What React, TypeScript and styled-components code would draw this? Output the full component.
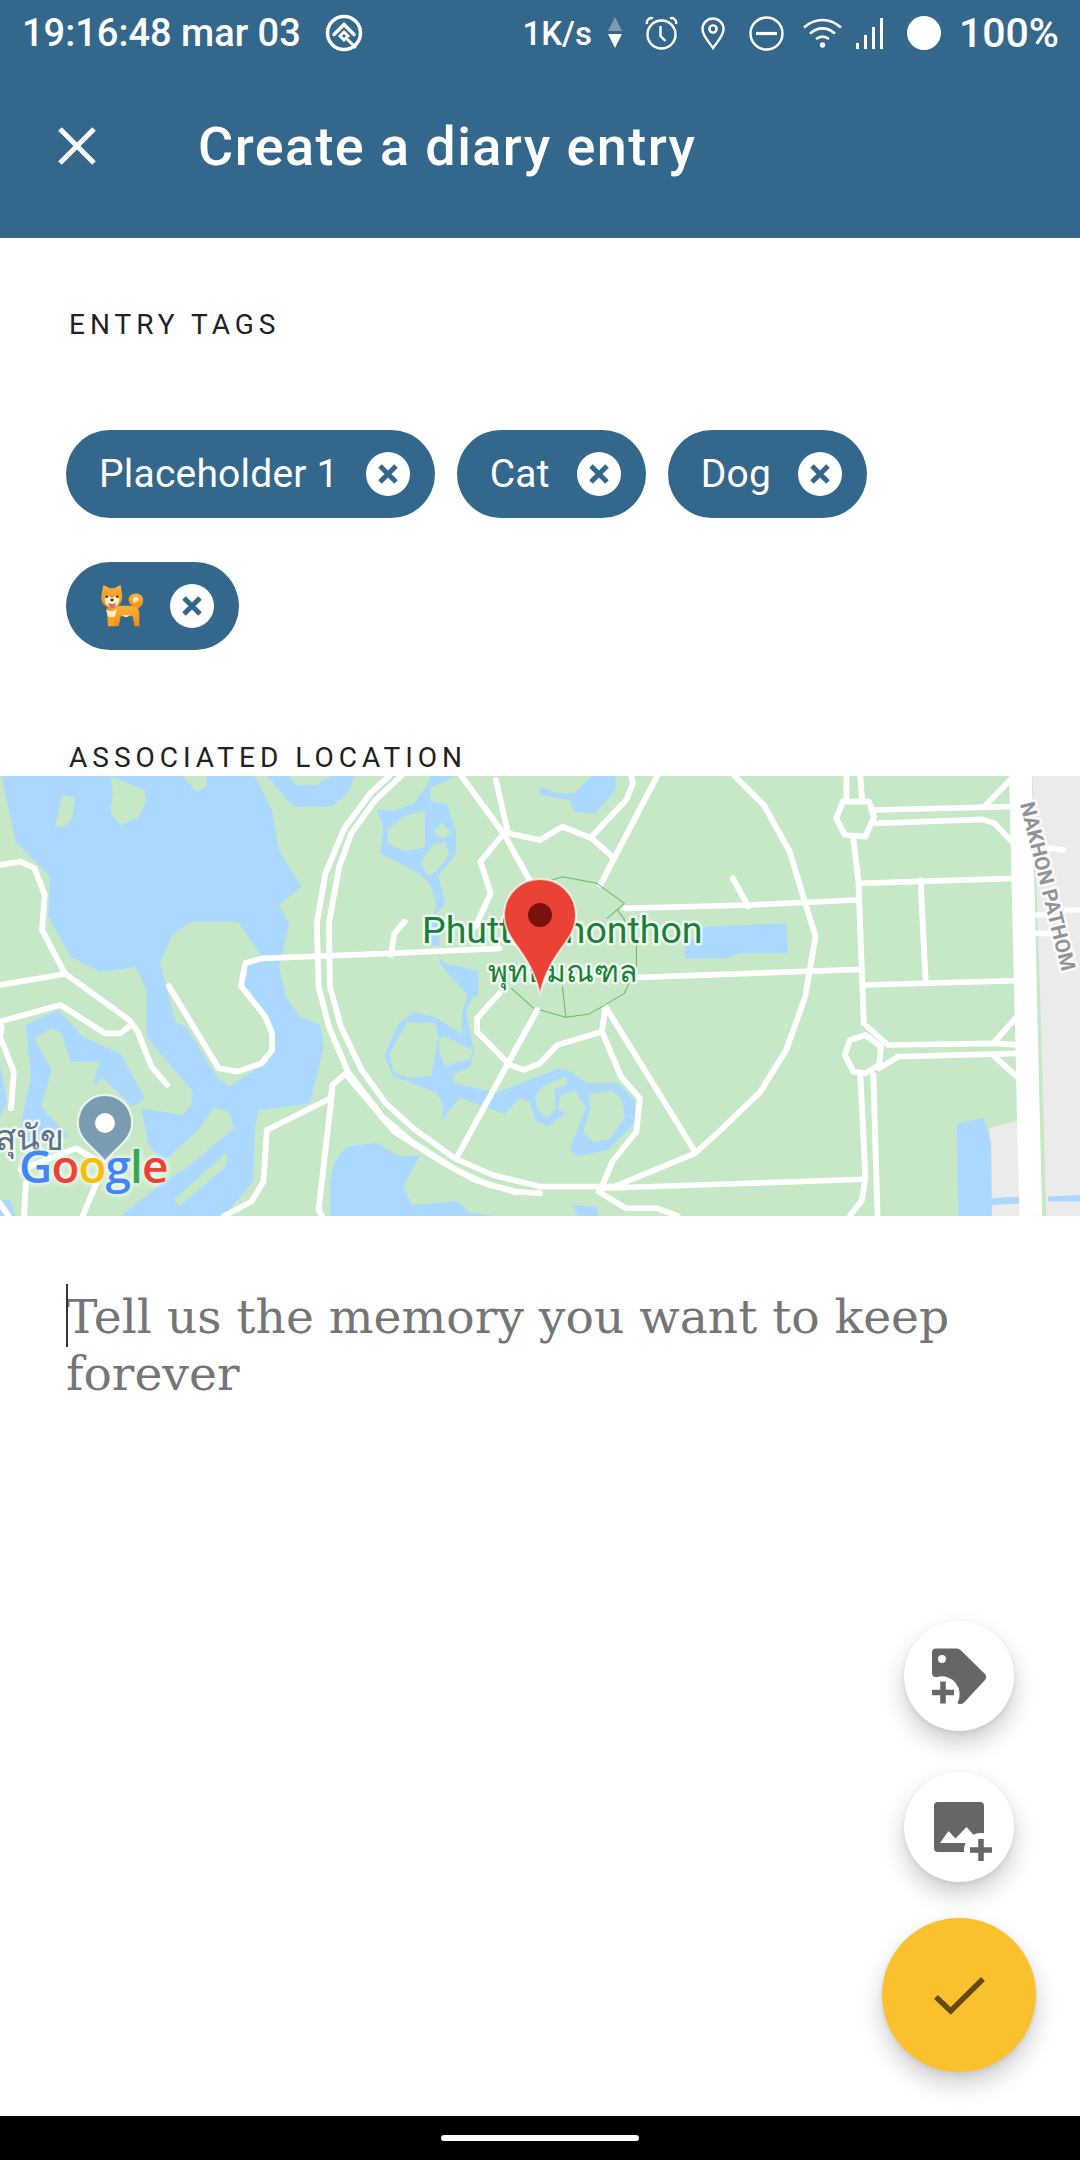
import * as React from "react";
import styled, { createGlobalStyle } from "styled-components";

const BLUE = "#34678c";
const GREEN = "#c6e8c6";
const WATER = "#aad8fe";
const GREY = "#ebebeb";

const GlobalStyle = createGlobalStyle`
  html, body {
    margin: 0;
    padding: 0;
    background: #ffffff;
  }
`;

const Screen = styled.div`
  position: relative;
  width: 1080px;
  height: 2160px;
  display: flex;
  flex-direction: column;
  overflow: hidden;
  background: #ffffff;
  font-family: "Roboto", "Liberation Sans", sans-serif;
`;

const Header = styled.header`
  height: 238px;
  flex-shrink: 0;
  display: flex;
  flex-direction: column;
  background: ${BLUE};
  color: #ffffff;
`;

const StatusBar = styled.div`
  height: 66px;
  padding: 0 21px 0 22px;
  display: flex;
  align-items: center;
  justify-content: space-between;
  font-weight: 500;
`;

const StatusGroup = styled.div`
  display: flex;
  align-items: center;
`;

const StatusText = styled.span<{ $gap?: number; $size: number }>`
  margin-right: ${(p) => p.$gap ?? 0}px;
  font-size: ${(p) => p.$size}px;
  white-space: nowrap;
`;

const StatusIcon = styled.svg<{ $gap?: number }>`
  display: block;
  margin-right: ${(p) => p.$gap ?? 0}px;
`;

const TitleBar = styled.div`
  flex: 1;
  padding: 0 0 12px 58px;
  display: flex;
  align-items: center;
`;

const CloseIcon = styled.svg`
  margin-right: 102px;
`;

const Title = styled.h1`
  margin: 0;
  font-size: 54px;
  font-weight: 500;
  letter-spacing: 1.4px;
`;

const Content = styled.main`
  flex: 1;
  display: flex;
  flex-direction: column;
`;

const SectionLabel = styled.h2<{ $top: number }>`
  margin: ${(p) => p.$top}px 0 0 69px;
  color: #222222;
  font-size: 28px;
  line-height: 30px;
  font-weight: 400;
  letter-spacing: 5px;
`;

const Chips = styled.div`
  margin: 90px 0 0 66px;
  width: 860px;
  display: flex;
  flex-wrap: wrap;
  gap: 44px 22px;
`;

const Chip = styled.div`
  height: 88px;
  padding: 0 25px 0 33px;
  display: flex;
  align-items: center;
  gap: 27px;
  border-radius: 44px;
  background: ${BLUE};
  color: #ffffff;
  font-size: 39px;
  letter-spacing: 0.2px;
`;

const ChipClose = styled.svg`
  flex-shrink: 0;
`;

const MapFrame = styled.div`
  position: relative;
  margin-top: 3px;
  height: 440px;
  overflow: hidden;
  background: ${GREEN};
`;

const MapDrawing = styled.svg`
  display: block;
`;

const GoogleMark = styled.div`
  position: absolute;
  left: 19px;
  top: 359px;
  font-family: "Open Sans", "Roboto", sans-serif;
  font-size: 46px;
  line-height: 60px;
  font-weight: 600;
  letter-spacing: -1px;
  text-shadow: 0 0 6px rgba(255, 255, 255, 0.85), 0 0 6px rgba(255, 255, 255, 0.85);
`;

const GoogleLetter = styled.span<{ $color: string }>`
  color: ${(p) => p.$color};
`;

const Memory = styled.div`
  position: relative;
  margin: 72px 60px 0 66px;
  color: #757575;
  font-family: "DejaVu Serif", "Liberation Serif", serif;
  font-size: 47.200px;
  line-height: 57px;
`;

const Caret = styled.span`
  position: absolute;
  left: 0;
  top: -4px;
  width: 2px;
  height: 63px;
  background: #333333;
`;

const Fab = styled.button<{ $size: number; $bg: string; $top: number }>`
  position: absolute;
  left: ${(p) => 959 - p.$size / 2}px;
  top: ${(p) => p.$top - p.$size / 2}px;
  width: ${(p) => p.$size}px;
  height: ${(p) => p.$size}px;
  padding: 0;
  border: none;
  border-radius: 50%;
  background: ${(p) => p.$bg};
  box-shadow: 0 12px 24px rgba(0, 0, 0, 0.2), 0 2px 5px rgba(0, 0, 0, 0.08);
`;

const NavBar = styled.div`
  height: 44px;
  flex-shrink: 0;
  display: flex;
  align-items: center;
  justify-content: center;
  background: #000000;
`;

const HomePill = styled.div`
  width: 198px;
  height: 6px;
  border-radius: 3px;
  background: #ffffff;
`;

// the road and water points were read off zoomed crops, so each set keeps its crop's scale
const Crop = {
  L: "translate(0,-6) scale(.3444,.3333)",
  R: "translate(540,-6) scale(.3444,.3333)",
  Upper: "translate(330,0) scale(.3333)",
  Lower: "translate(330,220) scale(.3333)",
};

const waterLeft = [
  "5,18 45,215 145,320 140,440 205,560 290,605 395,592 425,660 425,800 560,965 555,1005 530,1035 410,1015 430,1120 470,1180 580,1075 620,1012 665,1025 680,1075 540,1195 470,1240 350,1338 650,1338 735,1235 740,1080 750,1020 900,1000 940,830 930,765 870,740 830,680 810,590 840,460 810,405 875,350 810,240 790,120 740,18",
  "775,18 850,110 960,110 1010,70 1030,18",
  "170,720 240,800 350,850 420,985 385,1010 300,925 270,945 290,875 205,875 180,790 150,775 100,805 150,900 120,1010 200,1100 60,1130 65,1040 90,920 75,765",
  "0,880 20,1000 0,1040",
  "0,1290 30,1290 45,1338 0,1338",
];

const greenLeft = [
  "180,75 218,80 210,145 185,170 160,170",
  "320,18 420,60 425,95 400,145 350,165 320,130 328,70",
  "530,18 570,65 600,50 600,18",
  "465,580 500,495 555,455 690,455 755,550 710,580 695,645 790,770 795,840 770,880 665,950 630,920 540,770 480,745 510,755",
  "505,1290 660,1145 655,1190 520,1310",
  "840,18 860,45 920,45 960,18",
];

const waterUpper = [
  "140,100 185,105 250,85 290,30 300,0 380,0 300,35 302,75 350,85 378,165 378,235 325,298 345,385 320,410 330,510 305,510 305,430 320,385 300,325 270,295 150,230 160,150",
  "325,540 345,562 445,585 445,660 415,660 335,570",
];

const greenUpper = [
  "172,160 225,120 285,102 285,215 225,225 175,205",
  "310,165 335,140 365,170 335,190",
  "272,260 310,205 345,197 358,235 320,285 295,300",
];

const waterLower = [
  "163,180 205,82 255,47 320,65 395,115 397,45 412,0 432,0 407,45 432,165 420,215 370,235 372,262 500,290 685,218 720,225 770,262 865,262 915,315 915,380 835,462 742,480 720,460 768,335 735,282 690,300 685,338 705,355 655,390 618,378 600,318 570,305 525,355 390,305 335,370 340,330 320,290 190,240",
  "0,560 12,500 50,452 140,440 210,482 272,478 220,570 245,628 380,615 420,650 500,660 0,660",
  "725,628 800,632 805,660 745,660",
];

const greenLower = [
  "180,170 232,78 315,82 325,120 305,240 240,245 190,228",
  "328,125 345,120 430,165 420,190 345,210 328,170",
  "640,270 710,240 712,265 672,282 678,335 650,365 622,340 615,300",
  "775,295 845,282 875,310 885,365 840,428 792,440 760,408 780,338",
];

const roadsLeft = [
  "1130,18 1075,70 1000,175 945,310 920,460 925,650 955,770 1010,905 1110,1040 1195,1115 1325,1200 1420,1245 1500,1265 1568,1270",
  "1165,18 1090,90 1020,190 985,290 955,460 958,650 990,770 1050,900 1120,1000 1200,1075 1320,1165 1430,1215 1568,1250",
  "1450,535 1135,550 760,565 712,580 700,648 770,740 790,790 790,840 760,880 690,905 635,895 490,648",
  "1175,455 1145,490 1135,555",
  "0,285 60,275 100,295 130,375 122,480 188,610 375,750 400,785 440,890 485,945",
  "0,645 188,612",
  "0,755 175,705 305,790 350,790 380,765",
  "5,770 0,800 40,905 32,1015",
  "1010,905 965,945 960,985 775,1080 765,1235 730,1295 650,1338",
  "965,960 925,1320 935,1338",
  "1010,920 1145,1085 1290,1180 1380,1230 1500,1268",
  "1325,1165 1475,880 1560,720",
  "1340,18 1465,195 1540,335",
  "1440,30 1475,190 1568,210",
  "1455,200 1395,275 1425,370 1380,470",
  "1450,670 1385,745 1385,785 1480,885 1520,900 1568,880",
  "240,1338 280,1240",
  "70,1338 75,1240",
  "0,1300 25,1338",
  "60,1200 220,1135 280,1170",
];

const waterRight = [
  "0,50 50,70 100,70 150,18 220,18 220,60 160,130 100,125 85,90 0,75",
  "420,530 480,470 715,460 720,550 580,550 545,565 420,565",
  "1210,1060 1290,1045 1310,1120 1312,1338 1215,1338",
  "1310,1285 1400,1280 1400,1300 1310,1305",
  "1475,1280 1568,1275 1568,1295 1475,1295",
];

const greyRight = [
  "1430,18 1568,18 1568,1338 1470,1338 1450,600",
  "1305,1075 1395,1050 1400,1338 1310,1338",
];

const roadsRight = [
  "0,210 65,170 150,205 210,260",
  "340,18 175,345",
  "150,200 250,90 270,40 265,18",
  "245,415 610,405 920,390",
  "560,325 605,410",
  "565,18 650,105 725,245 800,500 770,680 715,840 640,965 530,1075 450,1150 215,1250 0,1250",
  "290,622 935,598",
  "190,710 450,1145",
  "190,710 180,785 235,920 290,985 280,1085 210,1175 180,1250",
  "180,785 50,825 0,880",
  "890,18 890,90",
  "930,18 935,90",
  "970,120 1360,110",
  "975,160 1285,148 1320,160 1370,215",
  "1290,110 1370,25",
  "910,205 925,340 940,760",
  "930,340 1375,325",
  "1105,330 1120,640",
  "940,645 1385,632",
  "950,770 1010,825 1320,820 1390,825",
  "985,895 1040,860 1390,850",
  "1320,815 1385,740",
  "1320,860 1390,925",
  "930,915 945,1220 935,1290 900,1338",
  "968,915 980,1338",
  "180,1255 940,1228",
  "170,1265 250,1315 340,1315 400,1338",
  "1450,230 1520,240",
  "1530,420 1568,420",
  "1445,435 1480,435",
  "1445,490 1480,490",
];

const loopsRight = [
  "860,145 880,95 955,95 970,140 945,200 885,195",
  "885,855 900,810 945,795 990,830 985,885 945,910 910,905",
];

const parkLines = [
  "35,330 65,320 165,340 245,400 195,445",
  "225,420 280,500 280,590 245,670 180,710 140,733 75,742 0,720",
  "65,650 75,740",
];

const Shapes: React.FC<{ points: string[]; fill: string }> = ({ points, fill }) => (
  <>
    {points.map((p) => <polygon key={p} points={p} fill={fill} />)}
  </>
);

const MapArt: React.FC = () => (
  <MapDrawing width="1080" height="440" viewBox="0 0 1080 440">
    <rect width="1080" height="440" fill={GREEN} />
    <g transform={Crop.L}>
      <Shapes points={waterLeft} fill={WATER} />
      <Shapes points={greenLeft} fill={GREEN} />
    </g>
    <g transform={Crop.R}>
      <Shapes points={greyRight} fill={GREY} />
      <Shapes points={waterRight} fill={WATER} />
    </g>
    <g transform={Crop.Upper}>
      <Shapes points={waterUpper} fill={WATER} />
      <Shapes points={greenUpper} fill={GREEN} />
    </g>
    <g transform={Crop.Lower}>
      <Shapes points={waterLower} fill={WATER} />
      <Shapes points={greenLower} fill={GREEN} />
    </g>
    <g transform={Crop.L} fill="none" stroke="#ffffff" strokeWidth="17" strokeLinejoin="round" strokeLinecap="round">
      {roadsLeft.map((p) => <polyline key={p} points={p} />)}
      <polyline points="1485,655 1550,715" stroke="#66bb6a" strokeWidth="3" />
    </g>
    <g transform={Crop.R} fill="none" stroke="#ffffff" strokeWidth="17" strokeLinejoin="round" strokeLinecap="round">
      {roadsRight.map((p) => <polyline key={p} points={p} />)}
      {loopsRight.map((p) => <polygon key={p} points={p} />)}
      <polyline points="1395,18 1425,1338" strokeWidth="66" strokeLinecap="butt" />
      {parkLines.map((p) => <polyline key={p} points={p} stroke="#66bb6a" strokeWidth="3" />)}
    </g>
    <g stroke="#ffffff" strokeOpacity=".75" strokeWidth="5" paintOrder="stroke" strokeLinejoin="round">
      <text x="422" y="167" fontFamily="Roboto, sans-serif" fontSize="37.500" fill="#188038">Phutthamonthon</text>
      <text x="488" y="206" fontFamily="'Noto Sans', 'DejaVu Sans', sans-serif" fontSize="30" fill="#188038">พุทธมณฑล</text>
      <text x="-5" y="374" fontFamily="'Noto Sans', 'DejaVu Sans', sans-serif" fontSize="35" fill="#5b7083">สุนัข</text>
      <text x="0" y="0" transform="translate(1020,28) rotate(76)" fontFamily="Roboto, sans-serif" fontWeight="700" fontSize="20.500" fill="#909498">NAKHON PATHOM</text>
    </g>
    <path d="M540 103c-20 0-36 16-36 36 0 27 27 36 36 80 9-44 36-53 36-80 0-20-16-36-36-36z" fill="#ea4335" stroke="#ffffff" strokeOpacity=".7" strokeWidth="2" />
    <circle cx="540" cy="139" r="12" fill="#7b1210" />
    <path d="M105 319c-15 0-27 12-27 28 0 18 18 25 27 39 9-14 27-21 27-39 0-16-12-28-27-28z" fill="#7a9cb0" stroke="#ffffff" strokeOpacity=".8" strokeWidth="2" />
    <circle cx="105" cy="347" r="10" fill="#ffffff" />
  </MapDrawing>
);

const Statuses: React.FC = () => (
  <StatusBar>
    <StatusGroup>
      <StatusText $gap={23} $size={38}>19:16:48 mar 03</StatusText>
      <StatusIcon width="40" height="40" viewBox="0 0 40 40" fill="none" stroke="#fff" strokeLinecap="round">
        <circle cx="20" cy="20" r="16.500" strokeWidth="3.500" />
        <path d="M10 21.500L20 11.500l10 10" strokeWidth="3.500" />
        <path d="M16 23l4-4 4 4-4 4zM24 27l7 7" strokeWidth="3" />
      </StatusIcon>
    </StatusGroup>
    <StatusGroup>
      <StatusText $gap={16} $size={33}>1K/s</StatusText>
      <StatusIcon $gap={23} width="14" height="32" viewBox="0 0 14 32">
        <path d="M7 0l7 14H0z" fill="#fff" fillOpacity=".35" />
        <path d="M0 17h14l-7 14z" fill="#fff" />
      </StatusIcon>
      <StatusIcon $gap={23} width="33" height="34" viewBox="0 0 33 34" fill="none" stroke="#fff" strokeWidth="2.400">
        <circle cx="16.500" cy="18.500" r="14" />
        <path d="M15.500 10v10l5 5M2 8c-1-4 3-7 6-5.500M31 8c1-4-3-7-6-5.500" />
      </StatusIcon>
      <StatusIcon $gap={24} width="24" height="33" viewBox="0 0 24 33" fill="none" stroke="#fff" strokeWidth="2.400">
        <path d="M12 31C8 25 1.500 19 1.500 12a10.500 10.500 0 0 1 21 0c0 7-6.500 13-10.500 19z" />
        <circle cx="12" cy="12" r="3.600" />
      </StatusIcon>
      <StatusIcon $gap={19} width="35" height="35" viewBox="0 0 35 35" fill="none" stroke="#fff" strokeWidth="2.400">
        <circle cx="17.500" cy="17.500" r="16" />
        <path d="M7 17.500h21" strokeWidth="3.200" />
      </StatusIcon>
      <StatusIcon $gap={14} width="39" height="30" viewBox="0 0 39 30" fill="none" stroke="#fff" strokeWidth="2.600">
        <path d="M1 9.500c11-10 26-10 37 0M7 15.500c8-6.500 17-6.500 25 0M13 21c4-3 9-3 13 0" />
        <circle cx="19.500" cy="27" r="2.700" fill="#fff" stroke="none" />
      </StatusIcon>
      <StatusIcon $gap={24} width="27" height="31" viewBox="0 0 27 31" fill="#fff">
        <rect x="0" y="25" width="3" height="6" />
        <rect x="8" y="17" width="3" height="14" />
        <rect x="16" y="9" width="3" height="22" />
        <rect x="24" y="0" width="3" height="31" />
      </StatusIcon>
      <StatusIcon $gap={18} width="34" height="34" viewBox="0 0 34 34">
        <circle cx="17" cy="17" r="17" fill="#fff" />
      </StatusIcon>
      <StatusText $size={41}>100%</StatusText>
    </StatusGroup>
  </StatusBar>
);

const ChipX: React.FC = () => (
  <ChipClose width="44" height="44" viewBox="0 0 44 44">
    <circle cx="22" cy="22" r="22" fill="#ffffff" />
    <path d="M14 14l16 16M30 14L14 30" stroke={BLUE} strokeWidth="5" />
  </ChipClose>
);

const Shiba: React.FC = () => (
  <svg width="44" height="44" viewBox="27 27 132 132" role="img" aria-label="🐕">
    <defs>
      <linearGradient id="coat" x1="0" y1="0" x2="0" y2="1">
        <stop offset="0" stopColor="#fbb13c" />
        <stop offset="1" stopColor="#f08c12" />
      </linearGradient>
    </defs>
    <path d="M128 92c-14-6-18-24-2-34 16-8 36 2 34 20-1 12-10 20-20 24z" fill="url(#coat)" />
    <path d="M134 84c-8-4-8-14 0-18 8-3 14 4 12 10z" fill="#fde3ae" />
    <path d="M62 92h62c14 0 24 8 24 24v38h-14l-6-30H92l-6 30H72l-4-26-10-8z" fill="url(#coat)" />
    <path d="M50 100h22v54H54z" fill="#f5a21f" />
    <path d="M48 104c8 6 24 6 32-2l-4 20c-6 6-16 6-22 2z" fill="#fdeccd" />
    <path d="M40 30l20 10h12l20-10 5 32c2 20-14 38-32 38S31 82 34 62z" fill="url(#coat)" />
    <path d="M44 70c8-8 14-6 22 0 8-6 14-8 22 0 2 14-10 28-22 28S42 84 44 70z" fill="#fdeccd" />
    <circle cx="50" cy="65" r="3.500" fill="#222" />
    <circle cx="82" cy="65" r="3.500" fill="#222" />
    <ellipse cx="66" cy="75" rx="5" ry="4" fill="#222" />
    <path d="M54 85c8 3 16 3 24 0-1 6-4 14-11 14s-12-8-13-14z" fill="#e0607e" />
    <path d="M96 118c8 4 16 4 24 0l-8 8H104z" fill="#fdeccd" />
  </svg>
);

const tags: { key: string; label: React.ReactNode }[] = [
  { key: "placeholder", label: "Placeholder 1" },
  { key: "cat", label: "Cat" },
  { key: "dog", label: "Dog" },
  { key: "shiba", label: <Shiba /> },
];

const googleLetters: [string, string][] = [
  ["G", "#4285f4"],
  ["o", "#ea4335"],
  ["o", "#fbbc05"],
  ["g", "#4285f4"],
  ["l", "#34a853"],
  ["e", "#ea4335"],
];

const App: React.FC = () => (
  <Screen>
    <GlobalStyle />
    <Header>
      <Statuses />
      <TitleBar>
        <CloseIcon width="38" height="38" viewBox="0 0 38 38">
          <path d="M2 2l34 34M36 2L2 36" stroke="#fff" strokeWidth="5" />
        </CloseIcon>
        <Title>Create a diary entry</Title>
      </TitleBar>
    </Header>
    <Content>
      <SectionLabel $top={72}>ENTRY TAGS</SectionLabel>
      <Chips>
        {tags.map((tag) => (
          <Chip key={tag.key}>
            {tag.label}
            <ChipX />
          </Chip>
        ))}
      </Chips>
      <SectionLabel $top={93}>ASSOCIATED LOCATION</SectionLabel>
      <MapFrame>
        <MapArt />
        <GoogleMark>
          {googleLetters.map(([letter, color], i) => (
            <GoogleLetter key={i} $color={color}>{letter}</GoogleLetter>
          ))}
        </GoogleMark>
      </MapFrame>
      <Memory>
        <Caret />
        Tell us the memory you want to keep forever
      </Memory>
    </Content>
    <NavBar>
      <HomePill />
    </NavBar>
    <Fab $size={110} $bg="#ffffff" $top={1676}>
      <svg width="110" height="110" viewBox="0 0 110 110">
        <path fillRule="evenodd" fill="#666666" d="M32 27.500H53q2 0 3.500 1.500L81 53q2.500 3 0 6L60 81.500q-3 2.500-6 1l-.5-.5A18 18 0 0 0 33 56H32a4 4 0 0 1-4-4V31.500a4 4 0 0 1 4-4zM38 34a4 4 0 1 0 0 8 4 4 0 0 0 0-8z" />
        <path d="M28 71.500h22M39 60.500v22" stroke="#666666" strokeWidth="5.500" />
      </svg>
    </Fab>
    <Fab $size={110} $bg="#ffffff" $top={1827}>
      <svg width="110" height="110" viewBox="0 0 110 110">
        <rect x="30" y="30" width="50" height="50" rx="4" fill="#666666" />
        <path d="M36 71l8.500-12 7 7.500 11-11.500 9 10 5 6z" fill="#ffffff" />
        <circle cx="77" cy="78" r="17" fill="#ffffff" />
        <path d="M66 78h22M77 67v22" stroke="#666666" strokeWidth="5.500" />
      </svg>
    </Fab>
    <Fab $size={154} $bg="#fbc02d" $top={1995}>
      <svg width="154" height="154" viewBox="0 0 154 154">
        <path d="M54 79l14.700 14L101 61" fill="none" stroke="#634a0e" strokeWidth="5.500" />
      </svg>
    </Fab>
  </Screen>
);

export default App;
